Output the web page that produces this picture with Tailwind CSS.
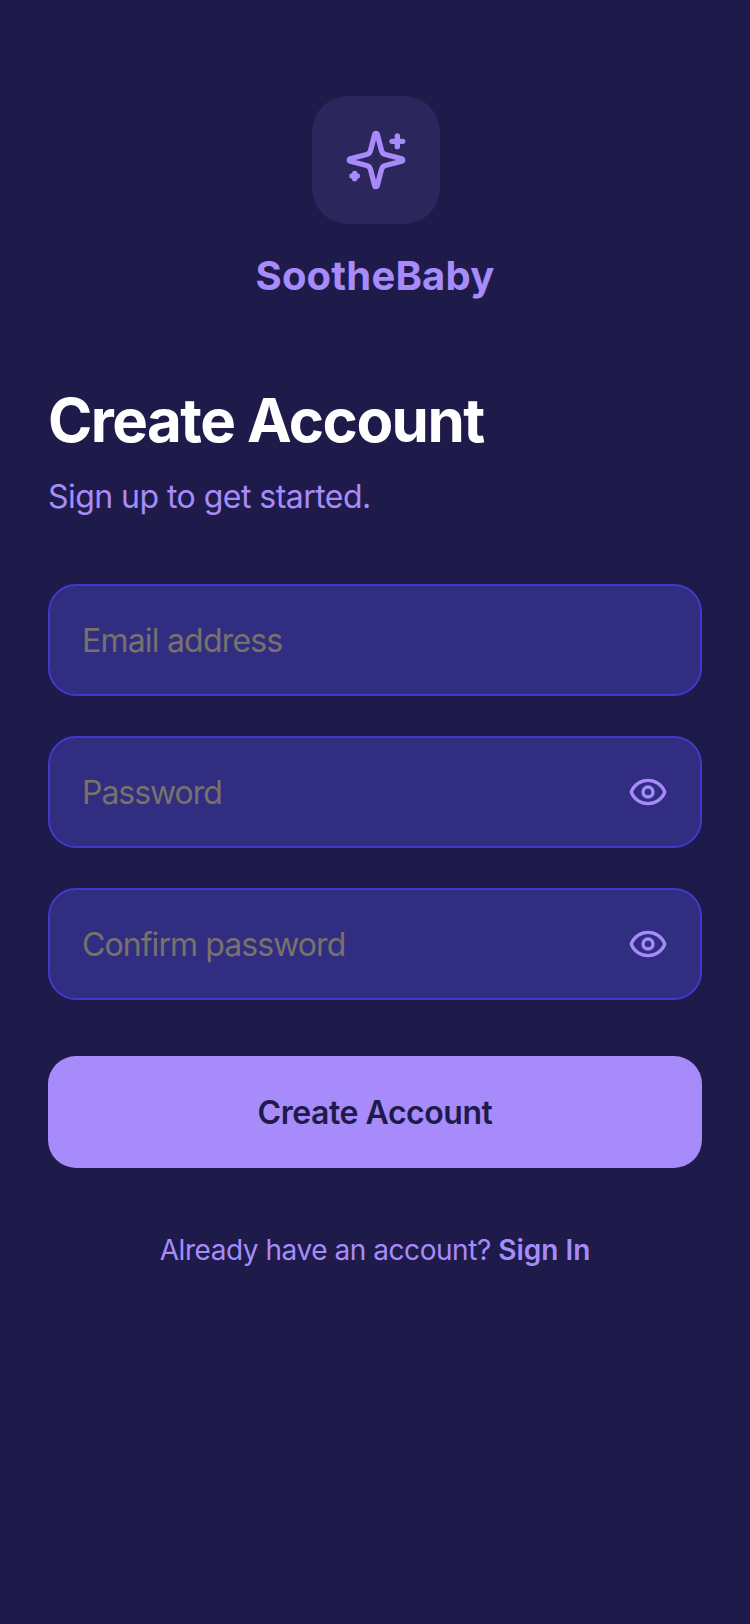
<!DOCTYPE html>
<html lang="en">
<head>
    <meta charset="UTF-8">
    <meta name="viewport" content="width=device-width, initial-scale=1.0">
    <title>SootheBaby - Create Account</title>
    <script src="https://cdn.jsdelivr.net/npm/@tailwindcss/browser@4"></script>
</head>
<body class="bg-[#1e1b4b] min-h-screen font-[Inter,sans-serif]">
    <div class="w-[750px] h-[1624px] px-12 pt-24">
        <!-- Logo -->
        <div class="flex flex-col items-center">
            <div class="ml-0.5 w-32 h-32 rounded-[36px] bg-[#a78bfa]/10 flex items-center justify-center">
                <svg class="w-16 h-16 text-[#a78bfa]" viewBox="0 0 24 24" fill="none" stroke="currentColor" stroke-width="2" stroke-linecap="round" stroke-linejoin="round">
                    <path d="M9.937 15.5A2 2 0 0 0 8.5 14.063l-6.135-1.582a.5.5 0 0 1 0-.962L8.5 9.936A2 2 0 0 0 9.937 8.5l1.582-6.135a.5.5 0 0 1 .963 0L14.063 8.5A2 2 0 0 0 15.5 9.937l6.135 1.581a.5.5 0 0 1 0 .964L15.5 14.063a2 2 0 0 0-1.437 1.437l-1.582 6.135a.5.5 0 0 1-.963 0z"/>
                    <path d="M20 3v4"/><path d="M22 5h-4"/><path d="M4 17v2"/><path d="M5 18H3"/>
                </svg>
            </div>
            <div class="mt-6 text-[40px] leading-[56px] font-bold tracking-[0.2px] text-[#a78bfa]">SootheBaby</div>
        </div>

        <!-- Heading -->
        <h1 class="mt-20 text-[60px] leading-[72px] font-bold tracking-[-1.55px] text-white">Create Account</h1>
        <p class="mt-[17px] text-[32px] leading-[48px] tracking-[-0.54px] text-[#a78bfa]">Sign up to get started.</p>

        <!-- Form -->
        <form class="mt-[63px] flex flex-col gap-10">
            <div class="h-28 rounded-[28px] bg-[#312e81] border-2 border-[#4338ca] px-8 flex items-center">
                <input type="email" placeholder="Email address" class="flex-1 min-w-0 pt-0.5 bg-transparent outline-none text-[32px] tracking-[-0.8px] text-white placeholder:text-[#78716c]">
            </div>
            <div class="h-28 rounded-[28px] bg-[#312e81] border-2 border-[#4338ca] px-8 flex items-center">
                <input type="password" placeholder="Password" class="flex-1 min-w-0 pt-0.5 bg-transparent outline-none text-[32px] tracking-[-1.05px] text-white placeholder:text-[#78716c]">
                <svg class="w-10 h-10 text-[#a78bfa]" viewBox="0 0 24 24" fill="none" stroke="currentColor" stroke-width="2" stroke-linecap="round" stroke-linejoin="round">
                    <path d="M2.062 12.348a1 1 0 0 1 0-.696 10.75 10.75 0 0 1 19.876 0 1 1 0 0 1 0 .696 10.75 10.75 0 0 1-19.876 0"/>
                    <circle cx="12" cy="12" r="3"/>
                </svg>
            </div>
            <div class="h-28 rounded-[28px] bg-[#312e81] border-2 border-[#4338ca] px-8 flex items-center">
                <input type="password" placeholder="Confirm password" class="flex-1 min-w-0 pt-0.5 bg-transparent outline-none text-[32px] tracking-[-0.93px] text-white placeholder:text-[#78716c]">
                <svg class="w-10 h-10 text-[#a78bfa]" viewBox="0 0 24 24" fill="none" stroke="currentColor" stroke-width="2" stroke-linecap="round" stroke-linejoin="round">
                    <path d="M2.062 12.348a1 1 0 0 1 0-.696 10.75 10.75 0 0 1 19.876 0 1 1 0 0 1 0 .696 10.75 10.75 0 0 1-19.876 0"/>
                    <circle cx="12" cy="12" r="3"/>
                </svg>
            </div>
            <button type="button" class="mt-4 h-28 pt-0.5 rounded-[28px] bg-[#a78bfa] text-[#1e1b4b] text-[32px] tracking-[-0.45px] font-semibold">Create Account</button>
        </form>

        <p class="mt-[62px] text-center text-[28px] leading-10 tracking-[-0.45px] text-[#a78bfa]">Already have an account? <span class="font-semibold tracking-normal">Sign In</span></p>
    </div>
</body>
</html>
